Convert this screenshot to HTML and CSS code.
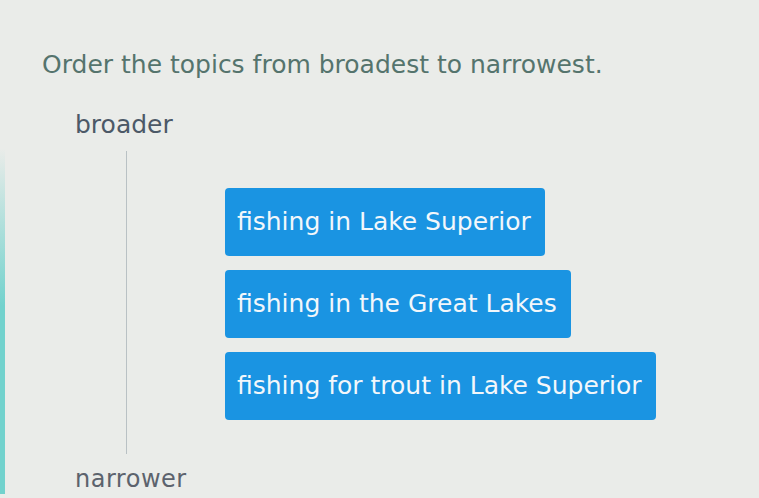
FILE: index.html
```html
<!DOCTYPE html>
<html>
  <head>
    <title>Order the topics</title>
    <link rel="stylesheet" href="styles.css">
  </head>
  <body>
    <div class="question">
      <h1>Order the topics from broadest to narrowest.</h1>

      <div class="scale">
        <div class="label">broader</div>
        <div class="range">
          <div class="track"></div>
          <ol class="topics">
            <li>fishing in Lake Superior</li>
            <li>fishing in the Great Lakes</li>
            <li>fishing for trout in Lake Superior</li>
          </ol>
        </div>
        <div class="label narrow">narrower</div>
      </div>
    </div>
  </body>
</html>
```

FILE: styles.css
```css
body {
    background: linear-gradient(to bottom, rgba(114, 210, 205, 0) 30%, #72d2cd 62%) no-repeat 0 0 / 5px 100%, #eaece9;
    font-family: "DejaVu Sans", Verdana, sans-serif;
    margin: 0;
}
.question {
    padding: 50px 0 0 42px;
}
h1 {
    color: #55746d;
    font-size: 25px;
    font-weight: normal;
    line-height: 30px;
    margin: 0;
}
.scale {
    margin-top: 30px;
    padding-left: 33px;
}
.label {
    color: #4c5967;
    font-size: 25px;
    line-height: 30px;
}
.label.narrow {
    color: #5c636d;
    font-size: 24px;
    letter-spacing: 0.5px;
}
.range {
    display: flex;
    gap: 98px;
}
.track {
    background-color: #b9c1c4;
    margin: 11px 0 10px 51px;
    width: 1px;
}
.topics {
    display: flex;
    flex-direction: column;
    align-items: flex-start;
    gap: 14px;
    list-style: none;
    margin: 0;
    padding: 48px 0 44px 0;
}
.topics li {
    background-color: #1a94e2;
    border-radius: 4px;
    color: #f2f7fb;
    font-size: 25px;
    line-height: 30px;
    padding: 19px 14px 19px 12px;
}
```
